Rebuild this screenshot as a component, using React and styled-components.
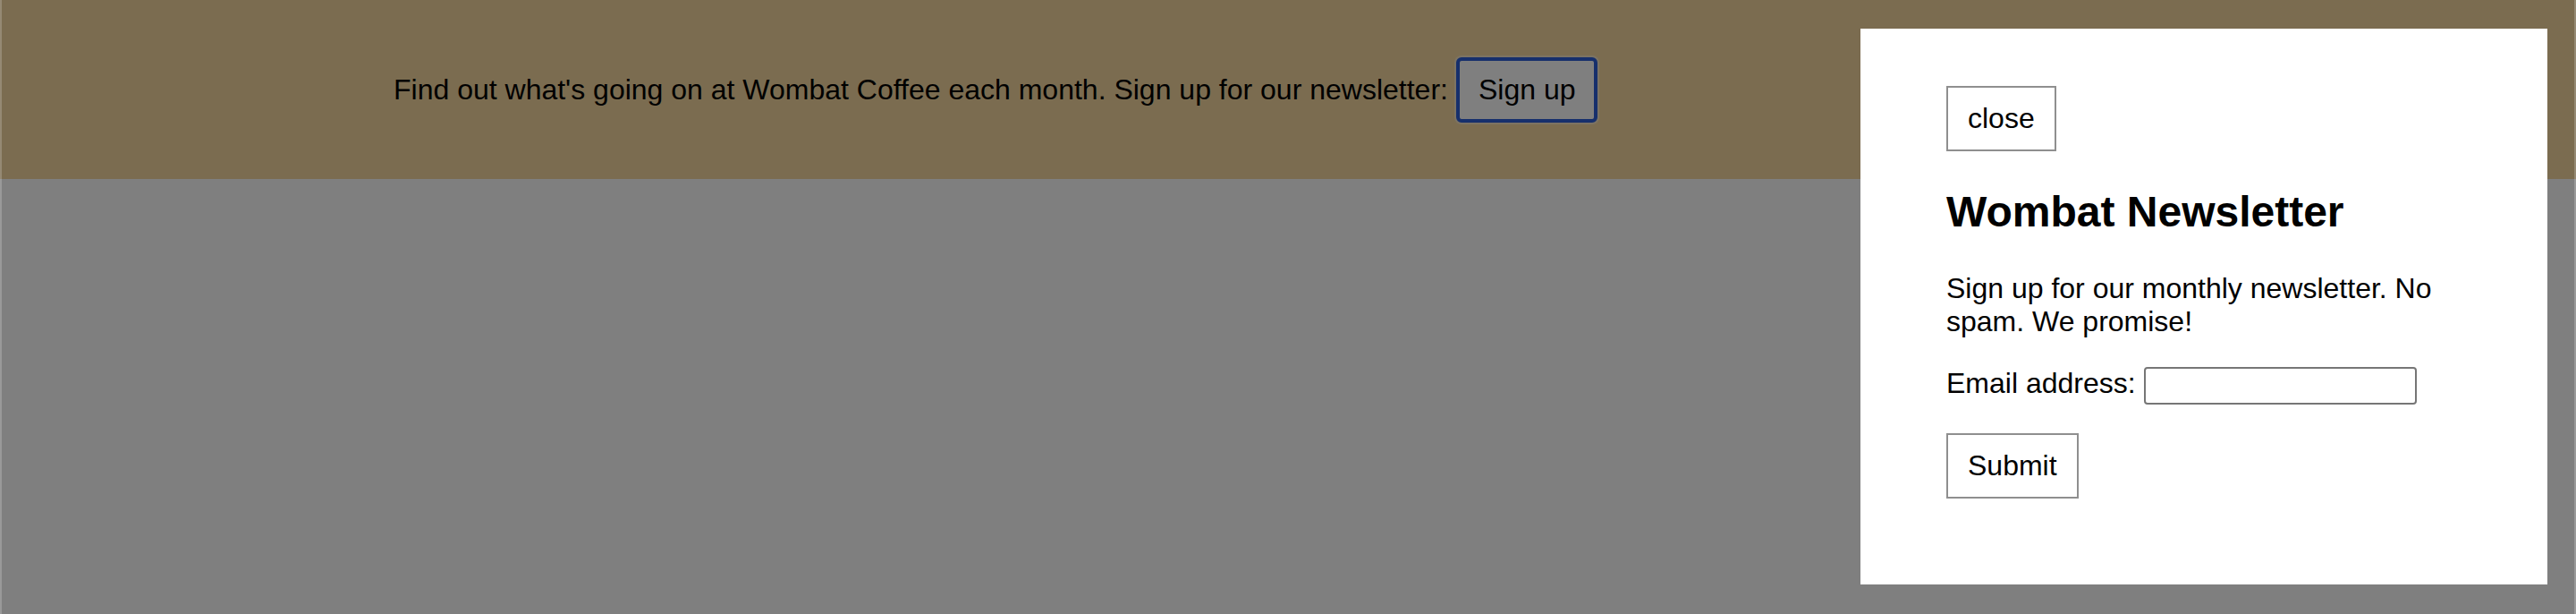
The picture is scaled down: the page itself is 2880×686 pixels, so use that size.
import styled, { createGlobalStyle } from "styled-components";

const GlobalStyle = createGlobalStyle`
  html, body {
    margin: 0;
    padding: 0;
    background: #ffffff;
  }
  body {
    font-family: "Liberation Sans", Arial, Helvetica, sans-serif;
    font-size: 32px;
    color: #000;
  }
`;

// page underneath the dialog
const Page = styled.div`
  position: relative;
  min-height: 686px;
`;

const Banner = styled.header`
  height: 200px;
  box-sizing: border-box;
  background-color: #f6d8a0;
  display: flex;
  align-items: center;
  gap: 9px;
  padding-left: 440px;
`;

const BannerText = styled.span`
  white-space: nowrap;
`;

const Button = styled.button`
  font-family: inherit;
  font-size: 32px;
  line-height: normal;
  color: #000;
  background-color: #ffffff;
  border: 2px solid #8f8f8f;
  padding: 16px 22px;
  margin: 0;
  cursor: pointer;
  display: inline-block;
`;

// the trigger keeps its focus ring after opening the dialog
const SignUpButton = styled(Button)`
  border: 4px solid #2c5fd8;
  border-radius: 6px;
  padding: 14px 21px;
  box-shadow: 0 0 0 2px rgba(255, 255, 255, 0.4);
`;

const Backdrop = styled.div`
  position: fixed;
  inset: 0;
  background-color: rgba(0, 0, 0, 0.5);
  border-left: 2px solid rgba(255, 255, 255, 0.2);
  border-right: 2px solid rgba(255, 255, 255, 0.2);
`;

const Dialog = styled.div`
  position: fixed;
  top: 32px;
  right: 32px;
  width: 768px;
  box-sizing: border-box;
  padding: 64px 96px;
  background-color: #ffffff;
`;

const Title = styled.h2`
  font-size: 48px;
  font-weight: bold;
  margin: 0.83em 0;
`;

const Paragraph = styled.p`
  margin: 32px 0;
`;

const Field = styled.div`
  display: flex;
  align-items: center;
  gap: 9px;
  margin: 32px 0;
`;

const Label = styled.label`
  padding-bottom: 4px;
`;

const EmailInput = styled.input`
  width: 305px;
  height: 42px;
  box-sizing: border-box;
  font-family: inherit;
  font-size: 26.67px;
  border: 2px solid #767676;
  border-radius: 4px;
  padding: 2px 6px;
  margin: 0;
  background: #fff;
`;

const NewsletterDialog = () => {
  return (
    <Dialog role="dialog" aria-labelledby="newsletter-title">
      <Button type="button">close</Button>
      <Title id="newsletter-title">Wombat Newsletter</Title>
      <Paragraph>Sign up for our monthly newsletter. No spam. We promise!</Paragraph>
      <form onSubmit={(e) => e.preventDefault()}>
        <Field>
          <Label htmlFor="email">Email address:</Label>
          <EmailInput id="email" type="email" />
        </Field>
        <Paragraph>
          <Button type="submit">Submit</Button>
        </Paragraph>
      </form>
    </Dialog>
  );
};

export default function App() {
  return (
    <>
      <GlobalStyle />
      <Page>
        <Banner>
          <BannerText>
            Find out what's going on at Wombat Coffee each month. Sign up for our newsletter:
          </BannerText>
          <SignUpButton type="button">Sign up</SignUpButton>
        </Banner>
      </Page>
      <Backdrop />
      <NewsletterDialog />
    </>
  );
}
